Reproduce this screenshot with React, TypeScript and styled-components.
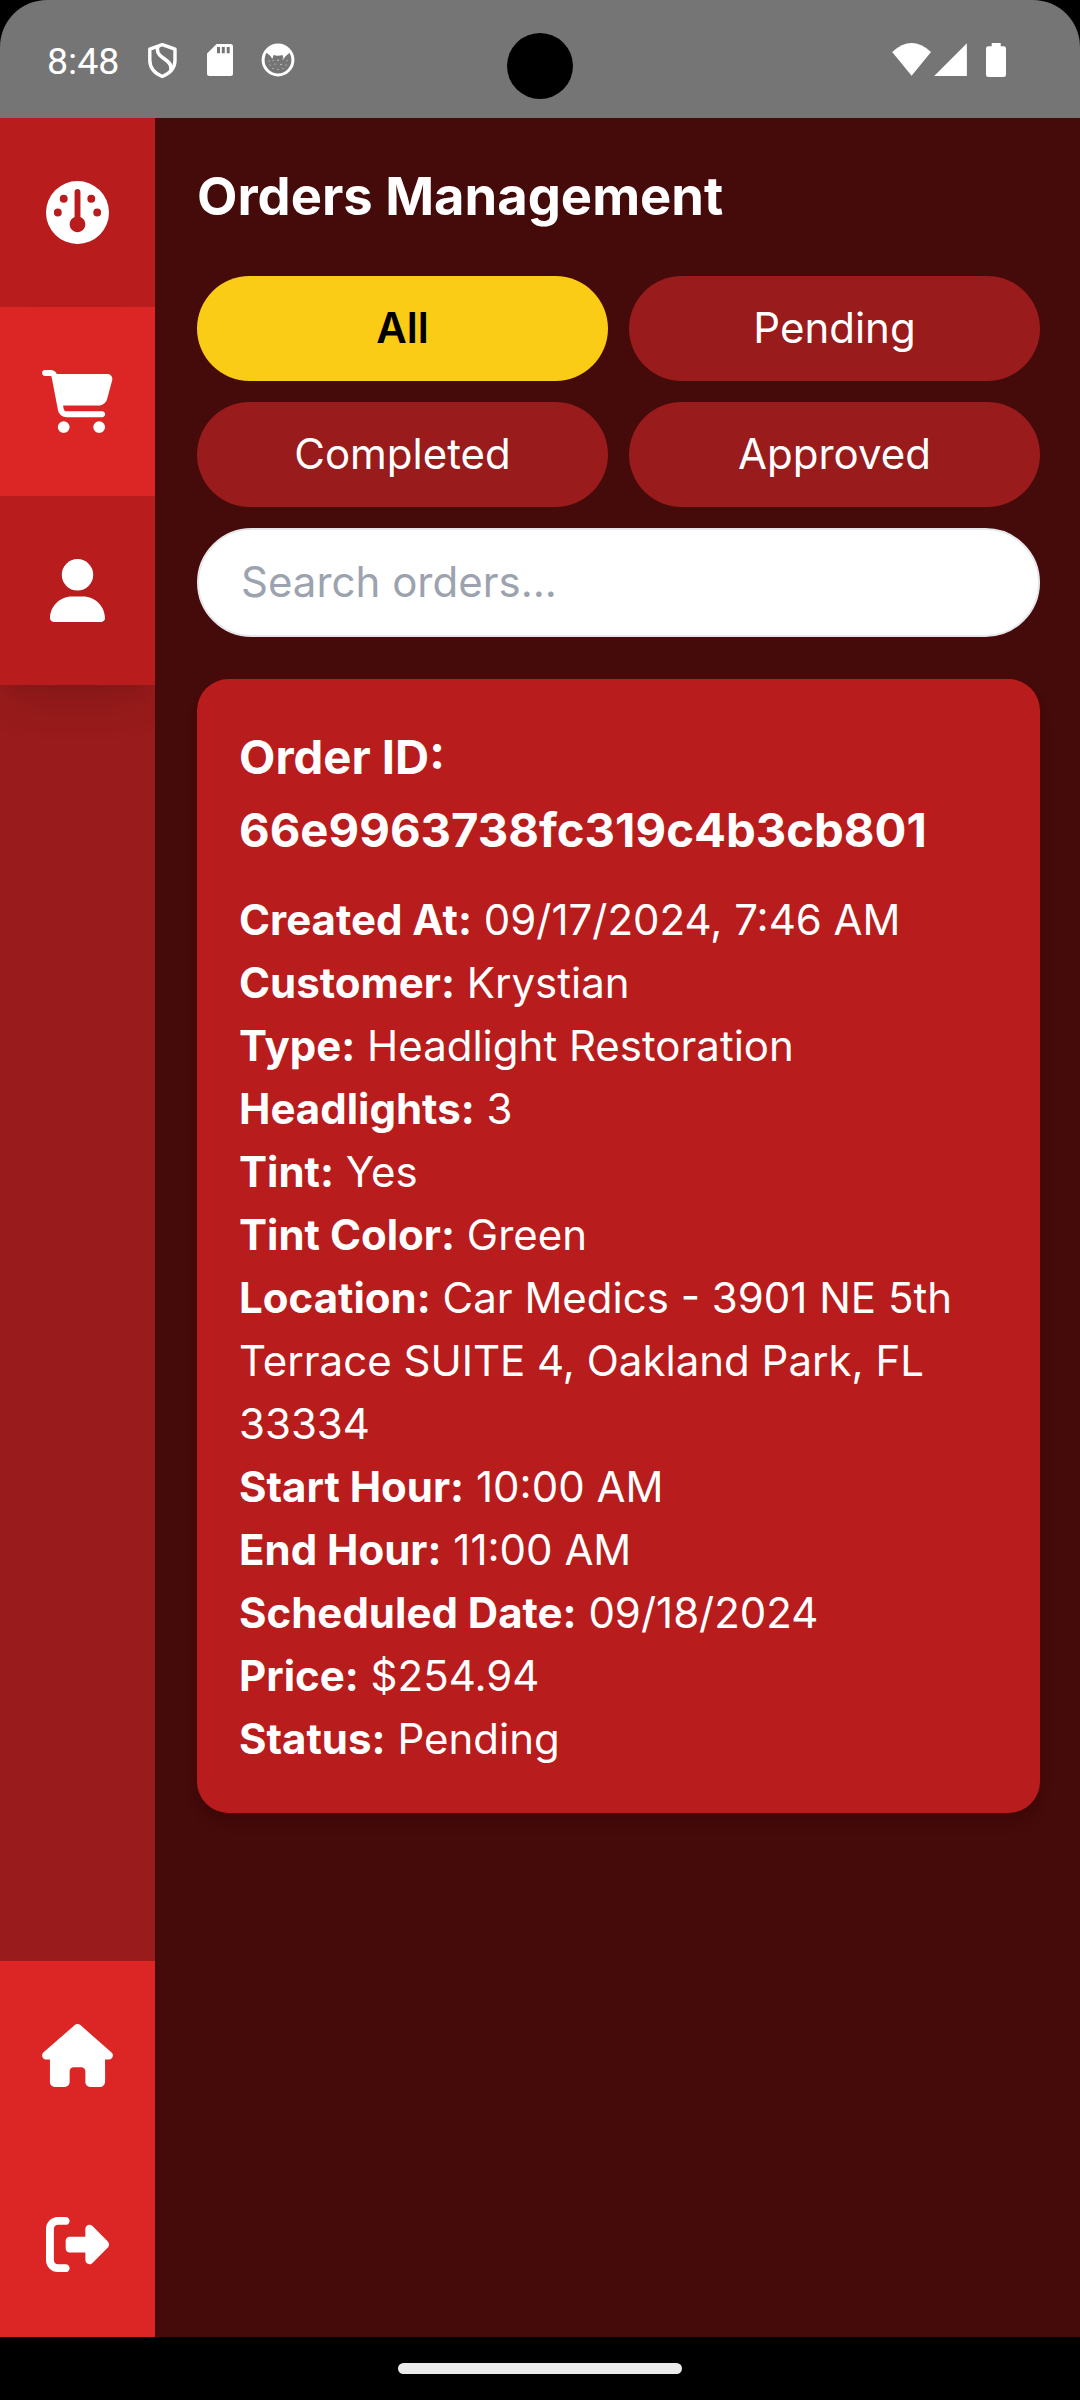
import React from "react";
import styled, { createGlobalStyle } from "styled-components";
import { FaCartShopping, FaGauge, FaHouse, FaRightFromBracket, FaUser } from "react-icons/fa6";

const GlobalStyle = createGlobalStyle`
  * { box-sizing: border-box; }
  body { margin: 0; background: #000; }
`;

const Device = styled.div`
  position: relative;
  display: flex;
  flex-direction: column;
  width: 1080px;
  height: 2400px;
  background: #000;
  color: #fff;
  font-family: Inter, "Liberation Sans", sans-serif;
  overflow: hidden;
`;

const StatusBar = styled.header`
  display: flex;
  align-items: center;
  justify-content: space-between;
  flex: none;
  height: 118px;
  padding: 2px 74px 0 47px;
  background: #757575;
  border-radius: 47px 47px 0 0;
`;

const StatusGroup = styled.div`
  display: flex;
  align-items: center;
`;

const Clock = styled.span`
  width: 101px;
  font: 400 37.6px/44px Roboto, sans-serif;
  padding-top: 1px;
`;

const Camera = styled.div`
  position: absolute;
  left: 507px;
  top: 33px;
  width: 66px;
  height: 66px;
  border-radius: 50%;
  background: #000;
`;

const Screen = styled.div`
  display: flex;
  flex: none;
  height: 2219px;
  overflow: hidden;
  background: #450a0a;
`;

const Sidebar = styled.nav`
  display: flex;
  flex-direction: column;
  justify-content: space-between;
  flex: none;
  width: 155px;
  height: 2221px;
  background: #991b1b;
  overflow: hidden;
`;

const NavGroup = styled.div`
  display: flex;
  flex-direction: column;
`;

const NavItem = styled.a<{ $bright?: boolean; $shadow?: boolean; $iconWidth?: number }>`
  position: relative;
  display: flex;
  align-items: center;
  justify-content: center;
  height: 189px;
  background: ${(p) => (p.$bright ? "#dc2626" : "#b91c1c")};
  box-shadow: ${(p) =>
    p.$shadow ? "0 26px 39px -8px rgba(0,0,0,.1), 0 10.5px 16px -10.5px rgba(0,0,0,.1)" : "none"};
  svg {
    display: block;
    flex: none;
    width: ${(p) => p.$iconWidth ?? 63}px;
    height: 63px;
  }
`;

const Main = styled.main`
  flex: 1;
  display: flex;
  flex-direction: column;
  padding: 42px 40px 42px 42px;
`;

const Title = styled.h1`
  margin: 0 0 42px;
  height: 74px;
  font-size: 52.5px;
  line-height: 72px;
  font-weight: 700;
`;

const Filters = styled.div`
  display: grid;
  grid-template-columns: 1fr 1fr;
  gap: 21px;
  margin-bottom: 21px;
`;

const FilterButton = styled.button<{ $active?: boolean }>`
  height: 105px;
  padding: 0 0 2px;
  border: 0;
  border-radius: 53px;
  background: ${(p) => (p.$active ? "#facc15" : "#991b1b")};
  color: ${(p) => (p.$active ? "#000" : "#fff")};
  font: ${(p) => (p.$active ? 600 : 400)} 42px/63px Inter, sans-serif;
`;

const Search = styled.input`
  height: 109px;
  margin: 0 0 42px;
  padding: 0 42px 2px;
  border: 2px solid #e5e7eb;
  border-radius: 55px;
  background: #fff;
  font: 400 42px/63px Inter, sans-serif;
  outline: none;
  &::placeholder { color: #9ca3af; opacity: 1; }
`;

const Card = styled.article`
  padding: 41px 42px 43px;
  border-radius: 31.5px;
  background: #b91c1c;
  box-shadow: 0 10.5px 16px -2.6px rgba(0,0,0,.1), 0 5px 10.5px -5px rgba(0,0,0,.1);
`;

const OrderId = styled.h2`
  margin: 0 0 22px;
  font-size: 47.25px;
  line-height: 73px;
  font-weight: 700;
`;

const Field = styled.p`
  margin: 0;
  font-size: 42px;
  line-height: 63px;
  strong { font-weight: 700; }
`;

const GestureBar = styled.footer`
  flex: 1;
  display: flex;
  align-items: center;
  justify-content: center;
`;

const Handle = styled.div`
  width: 284px;
  height: 11px;
  border-radius: 5.5px;
  background: #ebebeb;
`;

const fields: [string, string][] = [
  ["Created At:", "09/17/2024, 7:46 AM"],
  ["Customer:", "Krystian"],
  ["Type:", "Headlight Restoration"],
  ["Headlights:", "3"],
  ["Tint:", "Yes"],
  ["Tint Color:", "Green"],
  ["Location:", "Car Medics - 3901 NE 5th Terrace SUITE 4, Oakland Park, FL 33334"],
  ["Start Hour:", "10:00 AM"],
  ["End Hour:", "11:00 AM"],
  ["Scheduled Date:", "09/18/2024"],
  ["Price:", "$254.94"],
  ["Status:", "Pending"],
];

const NoticeIcons = () => (
  <svg width="150" height="40" viewBox="148 40 150 40" fill="#fff">
    <path d="M162.3 44.6 149.8 49.2v11c0 7.200 4.600 13 12.500 16.300 7.900-3.300 12.700-9.100 12.700-16.300v-11Z" fill="none" stroke="#fff" strokeWidth="3.400" strokeLinejoin="round" />
    <path d="M158 46c-2 5.500.5 8.500 4.500 11.500 4.500 3.300 9.500 6 8.300 12.500" fill="none" stroke="#fff" strokeWidth="3.600" />
    <path fillRule="evenodd" d="M216.500 44H230.500a2.500 2.500 0 0 1 2.500 2.500v27a2.500 2.500 0 0 1-2.500 2.500h-21a2.500 2.500 0 0 1-2.500-2.500V53.500ZM217 47v6.300h3V47Zm4.800 0v6.300h3V47Zm4.900 0v6.300h3V47Z" />
    <circle cx="278" cy="60" r="14.900" fill="none" stroke="#fff" strokeWidth="3" />
    <path d="M265 51.500C268 47.300 272.500 45 278 45s10 2.300 13 6.500l-5.500 4.700-1.800 2.800-1.200-4c-2.700 1-6.300 1-9 0l-1.200 4-1.800-3Z" />
    <g opacity=".8">
      <circle cx="269" cy="61" r=".6" /><circle cx="273" cy="60.500" r=".5" /><circle cx="278" cy="60.300" r=".7" />
      <circle cx="283" cy="59" r=".7" /><circle cx="287" cy="60.500" r=".5" /><circle cx="270" cy="65" r=".6" />
      <circle cx="275" cy="64" r=".6" /><circle cx="281" cy="64.500" r=".7" /><circle cx="286" cy="65" r=".6" />
      <circle cx="273" cy="68.500" r=".5" /><circle cx="278" cy="69.500" r=".6" /><circle cx="283" cy="68.500" r=".5" />
    </g>
  </svg>
);

const SystemIcons = () => (
  <svg width="115" height="36" viewBox="891 41 115 36" fill="#fff">
    <path d="M892.200 51Q911.500 33.200 931 51L911.600 74.800Z" />
    <path d="M966.900 42.300V75H934.200Z" />
    <path d="M991.700 42h9v3.300h3a2.300 2.300 0 0 1 2.300 2.300V73.700a2.300 2.300 0 0 1-2.300 2.300h-15.400a2.300 2.300 0 0 1-2.300-2.300V47.600a2.300 2.300 0 0 1 2.300-2.300h3.400Z" />
  </svg>
);

export default function App() {
  return (
    <>
      <GlobalStyle />
      <Device>
        <StatusBar>
          <StatusGroup>
            <Clock>8:48</Clock>
            <NoticeIcons />
          </StatusGroup>
          <SystemIcons />
        </StatusBar>
        <Camera />
        <Screen>
          <Sidebar>
            <NavGroup>
              <NavItem $shadow><FaGauge /></NavItem>
              <NavItem $shadow $bright $iconWidth={71}><FaCartShopping /></NavItem>
              <NavItem $shadow $iconWidth={55}><FaUser /></NavItem>
            </NavGroup>
            <NavGroup>
              <NavItem $bright $iconWidth={71}><FaHouse /></NavItem>
              <NavItem $bright><FaRightFromBracket /></NavItem>
            </NavGroup>
          </Sidebar>
          <Main>
            <Title>Orders Management</Title>
            <Filters>
              <FilterButton $active>All</FilterButton>
              <FilterButton>Pending</FilterButton>
              <FilterButton>Completed</FilterButton>
              <FilterButton>Approved</FilterButton>
            </Filters>
            <Search placeholder="Search orders..." />
            <Card>
              <OrderId>Order ID: 66e9963738fc319c4b3cb801</OrderId>
              {fields.map(([label, value]) => (
                <Field key={label}>
                  <strong>{label}</strong> {value}
                </Field>
              ))}
            </Card>
          </Main>
        </Screen>
        <GestureBar>
          <Handle />
        </GestureBar>
      </Device>
    </>
  );
}
